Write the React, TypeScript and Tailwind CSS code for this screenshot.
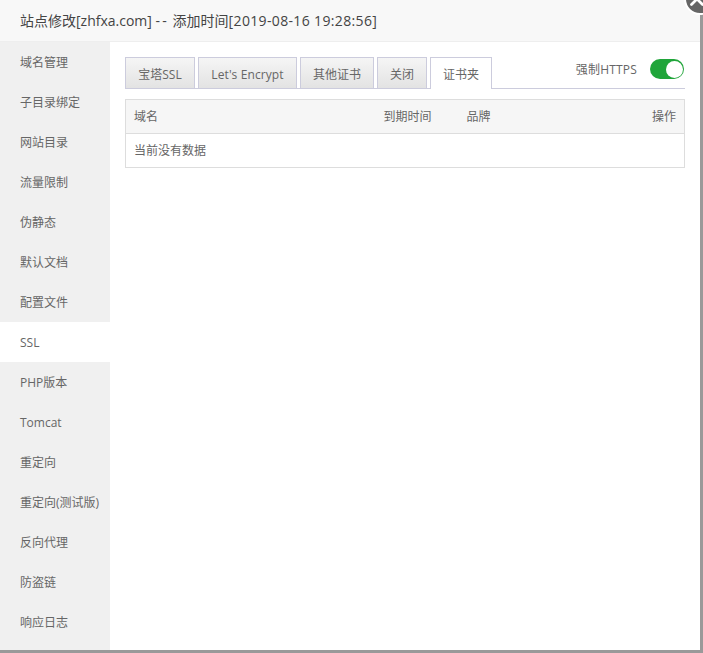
import { X } from 'lucide-react';

const menu = [
  '域名管理',
  '子目录绑定',
  '网站目录',
  '流量限制',
  '伪静态',
  '默认文档',
  '配置文件',
  'SSL',
  'PHP版本',
  'Tomcat',
  '重定向',
  '重定向(测试版)',
  '反向代理',
  '防盗链',
  '响应日志',
];

const tabs = [
  { label: '宝塔SSL', width: 'w-[70px]' },
  { label: "Let's Encrypt", width: 'w-[99px] tracking-[0.1px]' },
  { label: '其他证书', width: 'w-[74px]' },
  { label: '关闭', width: 'w-[50px]' },
];

export default function App() {
  return (
    <div className="h-[653px] w-[703px] overflow-hidden bg-[#999999] font-['Open_Sans','Noto_Sans_CJK_SC',sans-serif] text-xs text-[#666666]">
      <div className="relative flex h-[650px] w-[700px] flex-col bg-white">
        {/* close button */}
        <div className="absolute -right-[16px] -top-[17px] flex h-[32px] w-[32px] items-center justify-center rounded-full border-2 border-white bg-[#666666]">
          <X size={22} strokeWidth={3} className="mr-[6px] text-white" />
        </div>

        {/* Title */}
        <div className="h-[42px] shrink-0 border-b border-[#eeeeee] bg-[#f8f8f8] pl-5 text-sm leading-[41px] text-[#444444]">
          站点修改[zhfxa.com] <span className="tracking-[2.2px]">--</span> 添加时间
          <span className="tracking-[0.35px]">[2019-08-16 19:28:56]</span>
        </div>

        <div className="flex min-h-0 flex-1">
          {/* Sidebar */}
          <div className="w-[110px] shrink-0 bg-[#f0f0f0]">
            {menu.map((item) => (
              <div
                key={item}
                className={`h-10 whitespace-nowrap pl-5 pt-px leading-10 ${item === 'SSL' ? 'bg-white' : ''}`}
              >
                {item}
              </div>
            ))}
          </div>

          {/* Content */}
          <div className="flex-1 px-[15px] pt-[15px]">
            <div className="flex h-8 items-start border-b border-[#ccccdd]">
              <div className="flex gap-[3px]">
                {tabs.map((tab) => (
                  <div
                    key={tab.label}
                    className={`${tab.width} h-[31px] border border-b-0 border-[#ccccdd] bg-gradient-to-b from-[#f5f5f5] to-[#e3e3e3] text-center leading-[34px]`}
                  >
                    {tab.label}
                  </div>
                ))}
                <div className="relative h-8 w-[62px] border border-b-0 border-[#ccccdd] bg-white text-center leading-[34px]">
                  证书夹
                </div>
              </div>
              <span className="ml-auto mt-[5px] leading-4 tracking-[0.2px]">强制HTTPS</span>
              <div className="ml-[13px] mr-[1px] mt-[2px] flex h-5 w-[34px] items-center justify-end rounded-full bg-[#20a53a] pr-[1px]">
                <div className="h-[17px] w-[17px] rounded-full bg-white" />
              </div>
            </div>

            <table className="mt-[10px] w-[560px] table-fixed border border-[#dddddd]">
              <thead>
                <tr className="h-[34px] border-b border-[#dddddd] bg-[#f6f6f6]">
                  <th className="w-[250px] pl-[8px] text-left font-normal">域名</th>
                  <th className="w-[83px] pl-[8px] text-left font-normal">到期时间</th>
                  <th className="pl-[8px] text-left font-normal">品牌</th>
                  <th className="w-[60px] pr-[8px] text-right font-normal">操作</th>
                </tr>
              </thead>
              <tbody>
                <tr className="h-[34px]">
                  <td colSpan={4} className="pl-[8px]">
                    当前没有数据
                  </td>
                </tr>
              </tbody>
            </table>
          </div>
        </div>
      </div>
    </div>
  );
}
